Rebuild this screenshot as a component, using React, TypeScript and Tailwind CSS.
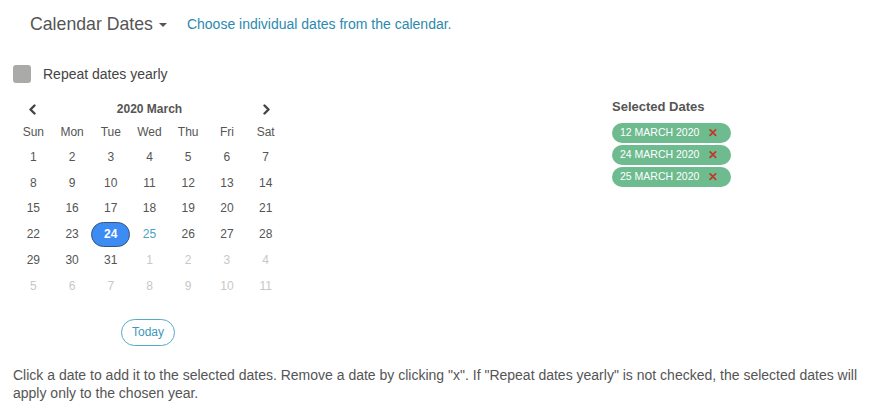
import React from "react";

const dayNames = ["Sun", "Mon", "Tue", "Wed", "Thu", "Fri", "Sat"];

type Cell = { day: number; muted?: boolean };

const buildWeeks = (): Cell[][] => {
  const cells: Cell[] = [];
  for (let d = 1; d <= 31; d++) cells.push({ day: d });
  for (let d = 1; d <= 11; d++) cells.push({ day: d, muted: true });
  const weeks: Cell[][] = [];
  for (let i = 0; i < cells.length; i += 7) weeks.push(cells.slice(i, i + 7));
  return weeks;
};

const selected = ["12 MARCH 2020", "24 MARCH 2020", "25 MARCH 2020"];

const Chevron = ({ dir }: { dir: "left" | "right" }) => (
  <svg width="9" height="11" viewBox="0 0 9 11" aria-hidden="true">
    <path
      d={dir === "left" ? "M6.5 1.5L2.5 5.5l4 4" : "M2.5 1.5l4 4-4 4"}
      fill="none"
      stroke="#444"
      strokeWidth="2.4"
      strokeLinecap="round"
      strokeLinejoin="round"
    />
  </svg>
);

export default function App() {
  const weeks = buildWeeks();

  return (
    <div className="w-[871px] h-[417px] bg-white font-['Liberation_Sans',Arial,sans-serif] text-[#555] px-[13px]">
      {/* header */}
      <div className="flex items-center h-[48px] pl-[17px]">
        <span className="text-[17.7px] text-[#555]">Calendar Dates</span>
        <span className="ml-[6px] mt-[2px] w-0 h-0 border-l-[4px] border-r-[4px] border-t-[4px] border-l-transparent border-r-transparent border-t-[#555]" />
        <span className="ml-[20px] text-[14px] text-[#2b8aad]">
          Choose individual dates from the calendar.
        </span>
      </div>

      <div className="flex items-center mt-[17px] h-[18px]">
        <span className="w-[18px] h-[18px] rounded-[3px] bg-[#aaaaa6]" />
        <span className="ml-[12px] text-[14px] text-[#444]">Repeat dates yearly</span>
      </div>

      <div className="flex mt-[16px]">
        {/* calendar */}
        <div className="w-[271px] ml-[1px]">
          <div className="flex items-center justify-between h-[20px] px-[14px]">
            <Chevron dir="left" />
            <span className="text-[12px] font-bold text-[#555]">2020 March</span>
            <Chevron dir="right" />
          </div>
          <div className="grid grid-cols-7 h-[24px] items-center mt-[1px]">
            {dayNames.map((n) => (
              <span key={n} className="text-center text-[12px] text-[#555]">
                {n}
              </span>
            ))}
          </div>
          {weeks.map((week, wi) => (
            <div key={wi} className="grid grid-cols-7 h-[25.8px] items-center">
              {week.map((c, ci) => {
                const isSel = !c.muted && c.day === 24;
                const isHi = !c.muted && c.day === 25;
                return (
                  <div key={ci} className="flex justify-center">
                    <span
                      className={
                        isSel
                          ? "w-[39px] h-[25px] rounded-full bg-[#3d8cf4] border border-[#37557e] text-white font-bold text-[12px] flex items-center justify-center"
                          : c.muted
                          ? "text-[12px] text-[#c8c8c8]"
                          : isHi
                          ? "text-[12px] text-[#4aa3c4]"
                          : "text-[12px] text-[#555]"
                      }
                    >
                      {c.day}
                    </span>
                  </div>
                );
              })}
            </div>
          ))}
          <div className="flex justify-center mt-[20px]">
            <button className="w-[54px] h-[27px] mr-[3px] rounded-full border border-[#55aac8] text-[12px] text-[#3e98ba] bg-white">
              Today
            </button>
          </div>
        </div>

        {/* selected */}
        <div className="ml-[327px] -mt-[2px]">
          <div className="text-[13px] font-bold text-[#555] h-[20px] flex items-center">
            Selected Dates
          </div>
          <div className="flex flex-col gap-[2px] mt-[6px]">
            {selected.map((s) => (
              <div
                key={s}
                className="w-[119px] h-[20px] rounded-full bg-[#6dbb8e] flex items-center pl-[8px] text-[10.5px] text-white"
              >
                <span>{s}</span>
                <span className="ml-[9px] text-[#c0392b] font-bold text-[12px] leading-none">
                  ✕
                </span>
              </div>
            ))}
          </div>
        </div>
      </div>

      <p className="mt-[20px] text-[14px] leading-[18px] text-[#555]">
        Click a date to add it to the selected dates. Remove a date by clicking "x". If "Repeat dates yearly" is not checked, the selected dates will apply only to the chosen year.
      </p>
    </div>
  );
}
